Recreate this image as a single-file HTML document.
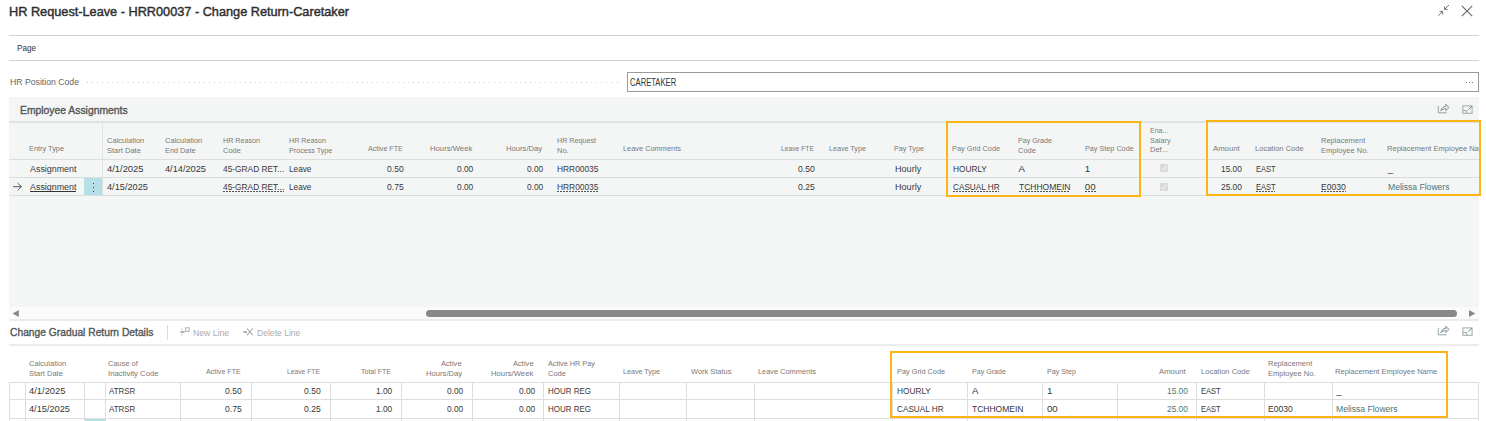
<!DOCTYPE html>
<html><head><meta charset="utf-8"><style>
html,body{margin:0;padding:0;}
body{width:1486px;height:421px;overflow:hidden;position:relative;background:#ffffff;font-family:'Liberation Sans', sans-serif;}
.t{position:absolute;white-space:nowrap;}
.b{position:absolute;}
</style></head><body>
<!-- header lines -->
<div class="b" style="left:9px;top:35px;width:1470px;height:1px;background:#d2d2d2"></div>
<div class="b" style="left:9px;top:60px;width:1470px;height:1px;background:#d2d2d2"></div>
<!-- dotted leader -->
<div class="b" style="left:87px;top:82px;width:535px;height:1px;background-image:linear-gradient(to right,#c2c2c2 1px,transparent 1px);background-size:5.1px 1px"></div>
<!-- input box -->
<div class="b" style="left:627px;top:72px;width:850px;height:18px;border:1px solid #9a9a9a;background:#fff"></div>
<div class="b" style="left:1466px;top:82px;width:1px;height:1px;background:#777;box-shadow:3px 0 0 #777,6px 0 0 #777"></div>
<!-- gray region -->
<div class="b" style="left:9px;top:97px;width:1470px;height:210px;background:#f4f6f5"></div>
<div class="b" style="left:9px;top:307px;width:1470px;height:13px;background:#fbfbfb"></div>
<!-- top table lines -->
<div class="b" style="left:9px;top:121px;width:1470px;height:2px;background:#e1e3e3"></div>
<div class="b" style="left:9px;top:159px;width:1470px;height:1px;background:#dcdede"></div>
<div class="b" style="left:9px;top:177px;width:1470px;height:1px;background:#dcdede"></div>
<div class="b" style="left:9px;top:195px;width:1470px;height:1px;background:#dcdede"></div>
<div class="b" style="left:102px;top:123px;width:1px;height:72px;background:#e1e3e3"></div>
<!-- blue cell -->
<div class="b" style="left:84px;top:178px;width:18px;height:17px;background:#b7dfe7"></div>
<div class="b" style="left:93px;top:183px;width:1px;height:1px;background:#444;box-shadow:0 4px 0 #444,0 8px 0 #444"></div>
<!-- arrow -->
<svg class="b" style="left:12px;top:182px" width="11" height="10" viewBox="0 0 11 10"><path d="M1 4.7H9.4M5.6 1L9.4 4.7L5.6 8.4" fill="none" stroke="#555" stroke-width="1"/></svg>
<!-- checkboxes -->
<svg class="b" style="left:1160px;top:164.4px" width="8" height="8" viewBox="0 0 8 8"><rect x="0" y="0" width="8" height="8" rx="1" fill="#dadada"/><path d="M1.8 4.2L3.4 5.7L6.3 2.2" fill="none" stroke="#fff" stroke-width="1"/></svg>
<svg class="b" style="left:1160px;top:183px" width="8" height="8" viewBox="0 0 8 8"><rect x="0" y="0" width="8" height="8" rx="1" fill="#dadada"/><path d="M1.8 4.2L3.4 5.7L6.3 2.2" fill="none" stroke="#fff" stroke-width="1"/></svg>
<!-- orange boxes -->
<div class="b" style="left:946px;top:121px;width:190.5px;height:72px;border:2px solid #fdb515"></div>
<div class="b" style="left:1205.5px;top:119.5px;width:271px;height:72.5px;border:2px solid #fdb515"></div>
<!-- scrollbar -->
<div class="b" style="left:425.5px;top:310px;width:1031.5px;height:7px;border-radius:3.5px;background:#888"></div>
<svg class="b" style="left:12px;top:310px" width="8" height="8" viewBox="0 0 8 8"><path d="M0.6 3.5L6.8 0V7Z" fill="#888"/></svg>
<svg class="b" style="left:1469px;top:310px" width="8" height="8" viewBox="0 0 8 8"><path d="M6.4 3.5L0 0V7Z" fill="#888"/></svg>
<!-- toolbar2 lines -->
<div class="b" style="left:9px;top:319px;width:1470px;height:2px;background:#ececec"></div>
<div class="b" style="left:9px;top:344px;width:1470px;height:2px;background:#ececec"></div>
<div class="b" style="left:167px;top:325px;width:1px;height:15px;background:#dcdcdc"></div>
<!-- new line icon -->
<svg class="b" style="left:180px;top:327px" width="11" height="10" viewBox="0 0 11 10"><path d="M0.5 5H4.5" stroke="#9a9a9a" stroke-width="1.6"/><path d="M2 1.5V3M2 7V8.8" stroke="#b5b5b5" stroke-width="0.9"/><rect x="5.5" y="0.8" width="3.6" height="3.6" fill="none" stroke="#b0b0b0" stroke-width="1"/></svg>
<!-- delete line icon -->
<svg class="b" style="left:243px;top:327px" width="11" height="10" viewBox="0 0 11 10"><path d="M0.5 5H4" stroke="#9a9a9a" stroke-width="1.6"/><path d="M4 1.5L9.8 8.2M4 8.2L9.8 1.5" stroke="#a8a8a8" stroke-width="1.1"/></svg>
<!-- share/expand icons (top) -->
<svg class="b" style="left:1437px;top:103px" width="14" height="11" viewBox="0 0 14 11"><path d="M1.3 3V9.8H9.8" fill="none" stroke="#93a5a8" stroke-width="1"/><path d="M3.8 7.8C4.5 4.8 6.5 3.4 8.8 3.4V1.2L12 4.5L8.8 7.6V5.6C6.8 5.6 5.2 6.5 3.8 7.8Z" fill="#e4ecee" stroke="#7b9093" stroke-width="0.9" stroke-linejoin="round"/></svg>
<svg class="b" style="left:1461.5px;top:104.5px" width="11" height="9" viewBox="0 0 11 9"><rect x="0.9" y="0.9" width="9.2" height="7.4" fill="none" stroke="#9aabad" stroke-width="1"/><path d="M0.9 5.6H4.8V8.3" fill="none" stroke="#9aabad" stroke-width="1"/><path d="M6.6 4.6L9.8 1.2" stroke="#5f6f71" stroke-width="0.9"/></svg>
<svg class="b" style="left:1437px;top:325px" width="14" height="11" viewBox="0 0 14 11"><path d="M1.3 3V9.8H9.8" fill="none" stroke="#93a5a8" stroke-width="1"/><path d="M3.8 7.8C4.5 4.8 6.5 3.4 8.8 3.4V1.2L12 4.5L8.8 7.6V5.6C6.8 5.6 5.2 6.5 3.8 7.8Z" fill="#e4ecee" stroke="#7b9093" stroke-width="0.9" stroke-linejoin="round"/></svg>
<svg class="b" style="left:1461.5px;top:326.5px" width="11" height="9" viewBox="0 0 11 9"><rect x="0.9" y="0.9" width="9.2" height="7.4" fill="none" stroke="#9aabad" stroke-width="1"/><path d="M0.9 5.6H4.8V8.3" fill="none" stroke="#9aabad" stroke-width="1"/><path d="M6.6 4.6L9.8 1.2" stroke="#5f6f71" stroke-width="0.9"/></svg>
<!-- collapse & close -->
<svg class="b" style="left:1437px;top:4px" width="13" height="13" viewBox="0 0 13 13"><path d="M1.2 11.8L5.6 7.4M2.6 7.4H5.6V10.4" fill="none" stroke="#777" stroke-width="1"/><path d="M12 1L7.6 5.4M7.6 2.4V5.4H10.6" fill="none" stroke="#777" stroke-width="1"/></svg>
<svg class="b" style="left:1461px;top:4.5px" width="12" height="12" viewBox="0 0 12 12"><path d="M0.8 0.8L11.2 11.2M11.2 0.8L0.8 11.2" stroke="#666" stroke-width="1.1"/></svg>
<!-- bottom table -->
<div class="b" style="left:9px;top:382px;width:1470px;height:1px;background:#dedede"></div>
<div class="b" style="left:9px;top:399px;width:1470px;height:1px;background:#dedede"></div>
<div class="b" style="left:9px;top:418px;width:1470px;height:1px;background:#dedede"></div>
<div class="b" style="left:84.5px;top:419px;width:20.5px;height:3px;background:#b7dfe7"></div>
<div class="b" style="left:8.9px;top:382px;width:1px;height:39px;background:#dedede"></div>
<div class="b" style="left:24.8px;top:382px;width:1px;height:39px;background:#dedede"></div>
<div class="b" style="left:83.8px;top:382px;width:1px;height:39px;background:#dedede"></div>
<div class="b" style="left:104.7px;top:382px;width:1px;height:39px;background:#dedede"></div>
<div class="b" style="left:180.0px;top:382px;width:1px;height:39px;background:#dedede"></div>
<div class="b" style="left:250.8px;top:382px;width:1px;height:39px;background:#dedede"></div>
<div class="b" style="left:329.9px;top:382px;width:1px;height:39px;background:#dedede"></div>
<div class="b" style="left:401.0px;top:382px;width:1px;height:39px;background:#dedede"></div>
<div class="b" style="left:472.3px;top:382px;width:1px;height:39px;background:#dedede"></div>
<div class="b" style="left:542.9px;top:382px;width:1px;height:39px;background:#dedede"></div>
<div class="b" style="left:619.0px;top:382px;width:1px;height:39px;background:#dedede"></div>
<div class="b" style="left:686.0px;top:382px;width:1px;height:39px;background:#dedede"></div>
<div class="b" style="left:753.7px;top:382px;width:1px;height:39px;background:#dedede"></div>
<div class="b" style="left:891.9px;top:382px;width:1px;height:39px;background:#dedede"></div>
<div class="b" style="left:967.0px;top:382px;width:1px;height:39px;background:#dedede"></div>
<div class="b" style="left:1042.1px;top:382px;width:1px;height:39px;background:#dedede"></div>
<div class="b" style="left:1117.0px;top:382px;width:1px;height:39px;background:#dedede"></div>
<div class="b" style="left:1196.4px;top:382px;width:1px;height:39px;background:#dedede"></div>
<div class="b" style="left:1264.0px;top:382px;width:1px;height:39px;background:#dedede"></div>
<div class="b" style="left:1331.6px;top:382px;width:1px;height:39px;background:#dedede"></div>
<div class="b" style="left:1477.8px;top:382px;width:1px;height:39px;background:#dedede"></div>
<div class="b" style="left:890px;top:351px;width:553.5px;height:63px;border:2px solid #fdb515"></div>

<div class='t' style='left:9.00px;top:4.76px;font-size:12.8px;line-height:14.8px;height:14.8px;font-weight:normal;color:#2e2e2e;letter-spacing:0.000px;transform:scaleX(0.9938);transform-origin:0 0;-webkit-text-stroke:0.42px #2e2e2e'>HR Request-Leave - HRR00037 - Change Return-Caretaker</div>
<div class='t' style='left:16.60px;top:42.68px;font-size:9.0px;line-height:11.0px;height:11.0px;font-weight:normal;color:#333333;letter-spacing:0.000px;transform:scaleX(0.9082);transform-origin:0 0'>Page</div>
<div class='t' style='left:9.60px;top:77.18px;font-size:9.0px;line-height:11.0px;height:11.0px;font-weight:normal;color:#666666;letter-spacing:0.000px;transform:scaleX(0.9644);transform-origin:0 0'>HR Position Code</div>
<div class='t' style='left:629.80px;top:77.13px;font-size:10px;line-height:12px;height:12px;font-weight:normal;color:#333333;letter-spacing:0.000px;transform:scaleX(0.7650);transform-origin:0 0'>CARETAKER</div>
<div class='t' style='left:19.60px;top:103.78px;font-size:10.6px;line-height:12.6px;height:12.6px;font-weight:normal;color:#505556;letter-spacing:0.000px;transform:scaleX(0.9771);transform-origin:0 0;-webkit-text-stroke:0.35px #505556'>Employee Assignments</div>
<div class='t' style='left:29.30px;top:144.20px;font-size:7.8px;line-height:9.8px;height:9.8px;font-weight:normal;color:#787878;letter-spacing:0.000px;transform:scaleX(0.9424);transform-origin:0 0'>Entry Type</div>
<div class='t' style='left:106.70px;top:135.80px;font-size:7.8px;line-height:9.8px;height:9.8px;font-weight:normal;color:#787878;letter-spacing:0.000px;transform:scaleX(0.9669);transform-origin:0 0'>Calculation</div>
<div class='t' style='left:106.70px;top:145.80px;font-size:7.8px;line-height:9.8px;height:9.8px;font-weight:normal;color:#787878;letter-spacing:0.000px;transform:scaleX(0.9656);transform-origin:0 0'>Start Date</div>
<div class='t' style='left:164.70px;top:135.80px;font-size:7.8px;line-height:9.8px;height:9.8px;font-weight:normal;color:#787878;letter-spacing:0.000px;transform:scaleX(0.9669);transform-origin:0 0'>Calculation</div>
<div class='t' style='left:164.70px;top:145.80px;font-size:7.8px;line-height:9.8px;height:9.8px;font-weight:normal;color:#787878;letter-spacing:0.000px;transform:scaleX(0.9380);transform-origin:0 0'>End Date</div>
<div class='t' style='left:222.90px;top:135.80px;font-size:7.8px;line-height:9.8px;height:9.8px;font-weight:normal;color:#787878;letter-spacing:0.000px;transform:scaleX(0.9203);transform-origin:0 0'>HR Reason</div>
<div class='t' style='left:222.90px;top:145.80px;font-size:7.8px;line-height:9.8px;height:9.8px;font-weight:normal;color:#787878;letter-spacing:0.000px;transform:scaleX(0.9549);transform-origin:0 0'>Code</div>
<div class='t' style='left:289.20px;top:135.80px;font-size:7.8px;line-height:9.8px;height:9.8px;font-weight:normal;color:#787878;letter-spacing:0.000px;transform:scaleX(0.9203);transform-origin:0 0'>HR Reason</div>
<div class='t' style='left:289.20px;top:145.80px;font-size:7.8px;line-height:9.8px;height:9.8px;font-weight:normal;color:#787878;letter-spacing:0.000px;transform:scaleX(0.9194);transform-origin:0 0'>Process Type</div>
<div class='t' style='left:368.00px;top:144.20px;font-size:7.8px;line-height:9.8px;height:9.8px;font-weight:normal;color:#787878;letter-spacing:0.000px;transform:scaleX(0.9128);transform-origin:0 0'>Active FTE</div>
<div class='t' style='left:430.00px;top:144.20px;font-size:7.8px;line-height:9.8px;height:9.8px;font-weight:normal;color:#787878;letter-spacing:0.000px;transform:scaleX(0.9891);transform-origin:0 0'>Hours/Week</div>
<div class='t' style='left:505.80px;top:144.20px;font-size:7.8px;line-height:9.8px;height:9.8px;font-weight:normal;color:#787878;letter-spacing:0.000px;transform:scaleX(0.9825);transform-origin:0 0'>Hours/Day</div>
<div class='t' style='left:557.00px;top:135.80px;font-size:7.8px;line-height:9.8px;height:9.8px;font-weight:normal;color:#787878;letter-spacing:0.000px;transform:scaleX(0.9183);transform-origin:0 0'>HR Request</div>
<div class='t' style='left:557.00px;top:145.80px;font-size:7.8px;line-height:9.8px;height:9.8px;font-weight:normal;color:#787878;letter-spacing:0.000px;transform:scaleX(0.9555);transform-origin:0 0'>No.</div>
<div class='t' style='left:622.80px;top:144.20px;font-size:7.8px;line-height:9.8px;height:9.8px;font-weight:normal;color:#787878;letter-spacing:0.000px;transform:scaleX(0.9475);transform-origin:0 0'>Leave Comments</div>
<div class='t' style='left:780.90px;top:144.20px;font-size:7.8px;line-height:9.8px;height:9.8px;font-weight:normal;color:#787878;letter-spacing:0.000px;transform:scaleX(0.8626);transform-origin:0 0'>Leave FTE</div>
<div class='t' style='left:828.50px;top:144.20px;font-size:7.8px;line-height:9.8px;height:9.8px;font-weight:normal;color:#787878;letter-spacing:0.000px;transform:scaleX(0.9182);transform-origin:0 0'>Leave Type</div>
<div class='t' style='left:894.10px;top:144.20px;font-size:7.8px;line-height:9.8px;height:9.8px;font-weight:normal;color:#787878;letter-spacing:0.000px;transform:scaleX(0.9236);transform-origin:0 0'>Pay Type</div>
<div class='t' style='left:952.20px;top:144.20px;font-size:7.8px;line-height:9.8px;height:9.8px;font-weight:normal;color:#787878;letter-spacing:0.000px;transform:scaleX(0.9405);transform-origin:0 0'>Pay Grid Code</div>
<div class='t' style='left:1018.40px;top:135.80px;font-size:7.8px;line-height:9.8px;height:9.8px;font-weight:normal;color:#787878;letter-spacing:0.000px;transform:scaleX(0.9093);transform-origin:0 0'>Pay Grade</div>
<div class='t' style='left:1018.40px;top:145.80px;font-size:7.8px;line-height:9.8px;height:9.8px;font-weight:normal;color:#787878;letter-spacing:0.000px;transform:scaleX(0.9549);transform-origin:0 0'>Code</div>
<div class='t' style='left:1084.60px;top:144.20px;font-size:7.8px;line-height:9.8px;height:9.8px;font-weight:normal;color:#787878;letter-spacing:0.000px;transform:scaleX(0.9284);transform-origin:0 0'>Pay Step Code</div>
<div class='t' style='left:1150.20px;top:126.00px;font-size:7.8px;line-height:9.8px;height:9.8px;font-weight:normal;color:#787878;letter-spacing:0.000px;transform:scaleX(0.9031);transform-origin:0 0'>Ena...</div>
<div class='t' style='left:1150.20px;top:136.00px;font-size:7.8px;line-height:9.8px;height:9.8px;font-weight:normal;color:#787878;letter-spacing:0.000px;transform:scaleX(0.9272);transform-origin:0 0'>Salary</div>
<div class='t' style='left:1150.20px;top:145.30px;font-size:7.8px;line-height:9.8px;height:9.8px;font-weight:normal;color:#787878;letter-spacing:0.000px;transform:scaleX(0.9603);transform-origin:0 0'>Def...</div>
<div class='t' style='left:1213.40px;top:144.20px;font-size:7.8px;line-height:9.8px;height:9.8px;font-weight:normal;color:#787878;letter-spacing:0.000px;transform:scaleX(0.9935);transform-origin:0 0'>Amount</div>
<div class='t' style='left:1255.40px;top:144.20px;font-size:7.8px;line-height:9.8px;height:9.8px;font-weight:normal;color:#787878;letter-spacing:0.000px;transform:scaleX(0.9683);transform-origin:0 0'>Location Code</div>
<div class='t' style='left:1320.70px;top:135.80px;font-size:7.8px;line-height:9.8px;height:9.8px;font-weight:normal;color:#787878;letter-spacing:0.000px;transform:scaleX(0.9640);transform-origin:0 0'>Replacement</div>
<div class='t' style='left:1320.70px;top:145.80px;font-size:7.8px;line-height:9.8px;height:9.8px;font-weight:normal;color:#787878;letter-spacing:0.000px;transform:scaleX(0.9697);transform-origin:0 0'>Employee No.</div>
<div class='t' style='left:1386.80px;top:144.20px;font-size:7.8px;line-height:9.8px;height:9.8px;font-weight:normal;color:#787878;letter-spacing:0.000px;width:94.79px;overflow:hidden;transform:scaleX(0.9674);transform-origin:0 0'>Replacement Employee Name</div>
<div class='t' style='left:29.70px;top:162.59px;font-size:9.7px;line-height:11.7px;height:11.7px;font-weight:normal;color:#383838;letter-spacing:0.000px;transform:scaleX(0.9185);transform-origin:0 0'>Assignment</div>
<div class='t' style='left:29.70px;top:180.79px;font-size:9.7px;line-height:11.7px;height:11.7px;font-weight:normal;color:#383838;letter-spacing:0.000px;transform:scaleX(0.9185);transform-origin:0 0'>Assignment</div><div class='b' style='left:29.70px;top:191.10px;width:46.50px;height:1px;background:#333'></div>
<div class='t' style='left:106.90px;top:162.59px;font-size:9.7px;line-height:11.7px;height:11.7px;font-weight:normal;color:#383838;letter-spacing:0.000px;transform:scaleX(0.9677);transform-origin:0 0'>4/1/2025</div>
<div class='t' style='left:106.90px;top:180.79px;font-size:9.7px;line-height:11.7px;height:11.7px;font-weight:normal;color:#383838;letter-spacing:0.000px;transform:scaleX(0.9511);transform-origin:0 0'>4/15/2025</div>
<div class='t' style='left:164.90px;top:162.59px;font-size:9.7px;line-height:11.7px;height:11.7px;font-weight:normal;color:#383838;letter-spacing:0.000px;transform:scaleX(0.9511);transform-origin:0 0'>4/14/2025</div>
<div class='t' style='left:223.10px;top:162.59px;font-size:9.7px;line-height:11.7px;height:11.7px;font-weight:normal;color:#383838;letter-spacing:0.000px;transform:scaleX(0.8612);transform-origin:0 0'>45-GRAD RET...</div>
<div class='t' style='left:223.10px;top:180.79px;font-size:9.7px;line-height:11.7px;height:11.7px;font-weight:normal;color:#383838;letter-spacing:0.000px;transform:scaleX(0.8612);transform-origin:0 0'>45-GRAD RET...</div><div class='b' style='left:223.10px;top:191.10px;width:61.20px;height:1px;background-image:linear-gradient(to right,#555 2px,transparent 2px);background-size:3px 1px'></div>
<div class='t' style='left:289.40px;top:162.59px;font-size:9.7px;line-height:11.7px;height:11.7px;font-weight:normal;color:#383838;letter-spacing:0.000px;transform:scaleX(0.8483);transform-origin:0 0'>Leave</div>
<div class='t' style='left:289.40px;top:180.79px;font-size:9.7px;line-height:11.7px;height:11.7px;font-weight:normal;color:#383838;letter-spacing:0.000px;transform:scaleX(0.8483);transform-origin:0 0'>Leave</div>
<div class='t' style='left:387.30px;top:162.59px;font-size:9.7px;line-height:11.7px;height:11.7px;font-weight:normal;color:#383838;letter-spacing:0.000px;transform:scaleX(0.8855);transform-origin:0 0'>0.50</div>
<div class='t' style='left:387.30px;top:180.79px;font-size:9.7px;line-height:11.7px;height:11.7px;font-weight:normal;color:#383838;letter-spacing:0.000px;transform:scaleX(0.8855);transform-origin:0 0'>0.75</div>
<div class='t' style='left:457.10px;top:162.59px;font-size:9.7px;line-height:11.7px;height:11.7px;font-weight:normal;color:#383838;letter-spacing:0.000px;transform:scaleX(0.8590);transform-origin:0 0'>0.00</div>
<div class='t' style='left:457.10px;top:180.79px;font-size:9.7px;line-height:11.7px;height:11.7px;font-weight:normal;color:#383838;letter-spacing:0.000px;transform:scaleX(0.8590);transform-origin:0 0'>0.00</div>
<div class='t' style='left:527.30px;top:162.59px;font-size:9.7px;line-height:11.7px;height:11.7px;font-weight:normal;color:#383838;letter-spacing:0.000px;transform:scaleX(0.8590);transform-origin:0 0'>0.00</div>
<div class='t' style='left:527.30px;top:180.79px;font-size:9.7px;line-height:11.7px;height:11.7px;font-weight:normal;color:#383838;letter-spacing:0.000px;transform:scaleX(0.8590);transform-origin:0 0'>0.00</div>
<div class='t' style='left:557.20px;top:162.59px;font-size:9.7px;line-height:11.7px;height:11.7px;font-weight:normal;color:#383838;letter-spacing:0.000px;transform:scaleX(0.8636);transform-origin:0 0'>HRR00035</div>
<div class='t' style='left:557.20px;top:180.79px;font-size:9.7px;line-height:11.7px;height:11.7px;font-weight:normal;color:#383838;letter-spacing:0.000px;transform:scaleX(0.8636);transform-origin:0 0'>HRR00035</div><div class='b' style='left:557.20px;top:191.10px;width:41.40px;height:1px;background-image:linear-gradient(to right,#555 2px,transparent 2px);background-size:3px 1px'></div>
<div class='t' style='left:798.30px;top:162.59px;font-size:9.7px;line-height:11.7px;height:11.7px;font-weight:normal;color:#383838;letter-spacing:0.000px;transform:scaleX(0.8855);transform-origin:0 0'>0.50</div>
<div class='t' style='left:798.30px;top:180.79px;font-size:9.7px;line-height:11.7px;height:11.7px;font-weight:normal;color:#383838;letter-spacing:0.000px;transform:scaleX(0.8855);transform-origin:0 0'>0.25</div>
<div class='t' style='left:894.70px;top:162.59px;font-size:9.7px;line-height:11.7px;height:11.7px;font-weight:normal;color:#383838;letter-spacing:0.000px;transform:scaleX(0.9357);transform-origin:0 0'>Hourly</div>
<div class='t' style='left:894.70px;top:180.79px;font-size:9.7px;line-height:11.7px;height:11.7px;font-weight:normal;color:#383838;letter-spacing:0.000px;transform:scaleX(0.9357);transform-origin:0 0'>Hourly</div>
<div class='t' style='left:952.50px;top:162.59px;font-size:9.7px;line-height:11.7px;height:11.7px;font-weight:normal;color:#383838;letter-spacing:0.000px;transform:scaleX(0.8548);transform-origin:0 0'>HOURLY</div>
<div class='t' style='left:952.50px;top:180.79px;font-size:9.7px;line-height:11.7px;height:11.7px;font-weight:normal;color:#383838;letter-spacing:0.000px;transform:scaleX(0.8458);transform-origin:0 0'>CASUAL HR</div><div class='b' style='left:952.50px;top:191.10px;width:46.60px;height:1px;background-image:linear-gradient(to right,#555 2px,transparent 2px);background-size:3px 1px'></div>
<div class='t' style='left:1018.60px;top:162.59px;font-size:9.7px;line-height:11.7px;height:11.7px;font-weight:normal;color:#383838;letter-spacing:0.000px'>A</div>
<div class='t' style='left:1018.60px;top:180.79px;font-size:9.7px;line-height:11.7px;height:11.7px;font-weight:normal;color:#383838;letter-spacing:0.000px;transform:scaleX(0.8778);transform-origin:0 0'>TCHHOMEIN</div><div class='b' style='left:1018.60px;top:191.10px;width:51.50px;height:1px;background-image:linear-gradient(to right,#555 2px,transparent 2px);background-size:3px 1px'></div>
<div class='t' style='left:1084.80px;top:162.59px;font-size:9.7px;line-height:11.7px;height:11.7px;font-weight:normal;color:#383838;letter-spacing:0.000px'>1</div>
<div class='t' style='left:1084.80px;top:180.79px;font-size:9.7px;line-height:11.7px;height:11.7px;font-weight:normal;color:#383838;letter-spacing:0.019px'>00</div><div class='b' style='left:1084.80px;top:191.10px;width:10.80px;height:1px;background-image:linear-gradient(to right,#555 2px,transparent 2px);background-size:3px 1px'></div>
<div class='t' style='left:1220.70px;top:162.59px;font-size:9.7px;line-height:11.7px;height:11.7px;font-weight:normal;color:#383838;letter-spacing:0.000px;transform:scaleX(0.8619);transform-origin:0 0'>15.00</div>
<div class='t' style='left:1220.70px;top:180.79px;font-size:9.7px;line-height:11.7px;height:11.7px;font-weight:normal;color:#383838;letter-spacing:0.000px;transform:scaleX(0.8619);transform-origin:0 0'>25.00</div>
<div class='t' style='left:1255.60px;top:162.59px;font-size:9.7px;line-height:11.7px;height:11.7px;font-weight:normal;color:#383838;letter-spacing:0.000px;transform:scaleX(0.7783);transform-origin:0 0'>EAST</div>
<div class='t' style='left:1255.60px;top:180.79px;font-size:9.7px;line-height:11.7px;height:11.7px;font-weight:normal;color:#383838;letter-spacing:0.000px;transform:scaleX(0.7783);transform-origin:0 0'>EAST</div><div class='b' style='left:1255.60px;top:191.10px;width:19.70px;height:1px;background-image:linear-gradient(to right,#555 2px,transparent 2px);background-size:3px 1px'></div>
<div class='t' style='left:1320.90px;top:180.79px;font-size:9.7px;line-height:11.7px;height:11.7px;font-weight:normal;color:#383838;letter-spacing:0.000px;transform:scaleX(0.8888);transform-origin:0 0'>E0030</div><div class='b' style='left:1320.90px;top:191.10px;width:24.90px;height:1px;background-image:linear-gradient(to right,#555 2px,transparent 2px);background-size:3px 1px'></div>
<div class='t' style='left:1387.50px;top:180.79px;font-size:9.7px;line-height:11.7px;height:11.7px;font-weight:normal;color:#4a7579;letter-spacing:0.000px;transform:scaleX(0.8855);transform-origin:0 0'>Melissa Flowers</div>
<div class='t' style='left:1387.70px;top:163.09px;font-size:9.7px;line-height:11.7px;height:11.7px;font-weight:normal;color:#383838;letter-spacing:0.000px'>_</div>
<div class='t' style='left:9.80px;top:326.33px;font-size:10.6px;line-height:12.6px;height:12.6px;font-weight:normal;color:#505556;letter-spacing:0.000px;transform:scaleX(0.9695);transform-origin:0 0;-webkit-text-stroke:0.35px #505556'>Change Gradual Return Details</div>
<div class='t' style='left:193.40px;top:327.98px;font-size:9.0px;line-height:11.0px;height:11.0px;font-weight:normal;color:#ababab;letter-spacing:0.000px;transform:scaleX(0.9645);transform-origin:0 0'>New Line</div>
<div class='t' style='left:256.90px;top:327.98px;font-size:9.0px;line-height:11.0px;height:11.0px;font-weight:normal;color:#ababab;letter-spacing:0.000px;transform:scaleX(0.9529);transform-origin:0 0'>Delete Line</div>
<div class='t' style='left:29.20px;top:358.70px;font-size:7.8px;line-height:9.8px;height:9.8px;font-weight:normal;color:#787878;letter-spacing:0.000px;transform:scaleX(0.9669);transform-origin:0 0'>Calculation</div>
<div class='t' style='left:29.20px;top:369.10px;font-size:7.8px;line-height:9.8px;height:9.8px;font-weight:normal;color:#787878;letter-spacing:0.000px;transform:scaleX(0.9656);transform-origin:0 0'>Start Date</div>
<div class='t' style='left:108.30px;top:358.70px;font-size:7.8px;line-height:9.8px;height:9.8px;font-weight:normal;color:#787878;letter-spacing:0.000px;transform:scaleX(0.9546);transform-origin:0 0'>Cause of</div>
<div class='t' style='left:108.30px;top:369.10px;font-size:7.8px;line-height:9.8px;height:9.8px;font-weight:normal;color:#787878;letter-spacing:0.000px;transform:scaleX(0.9875);transform-origin:0 0'>Inactivity Code</div>
<div class='t' style='left:205.80px;top:367.20px;font-size:7.8px;line-height:9.8px;height:9.8px;font-weight:normal;color:#787878;letter-spacing:0.000px;transform:scaleX(0.9128);transform-origin:0 0'>Active FTE</div>
<div class='t' style='left:286.80px;top:367.20px;font-size:7.8px;line-height:9.8px;height:9.8px;font-weight:normal;color:#787878;letter-spacing:0.000px;transform:scaleX(0.8626);transform-origin:0 0'>Leave FTE</div>
<div class='t' style='left:361.10px;top:367.20px;font-size:7.8px;line-height:9.8px;height:9.8px;font-weight:normal;color:#787878;letter-spacing:0.000px;transform:scaleX(0.8959);transform-origin:0 0'>Total FTE</div>
<div class='t' style='left:441.40px;top:358.70px;font-size:7.8px;line-height:9.8px;height:9.8px;font-weight:normal;color:#787878;letter-spacing:0.000px;transform:scaleX(0.9701);transform-origin:0 0'>Active</div>
<div class='t' style='left:425.80px;top:369.10px;font-size:7.8px;line-height:9.8px;height:9.8px;font-weight:normal;color:#787878;letter-spacing:0.000px;transform:scaleX(0.9825);transform-origin:0 0'>Hours/Day</div>
<div class='t' style='left:512.50px;top:358.70px;font-size:7.8px;line-height:9.8px;height:9.8px;font-weight:normal;color:#787878;letter-spacing:0.000px;transform:scaleX(0.9701);transform-origin:0 0'>Active</div>
<div class='t' style='left:490.80px;top:369.10px;font-size:7.8px;line-height:9.8px;height:9.8px;font-weight:normal;color:#787878;letter-spacing:0.000px;transform:scaleX(0.9891);transform-origin:0 0'>Hours/Week</div>
<div class='t' style='left:547.80px;top:358.70px;font-size:7.8px;line-height:9.8px;height:9.8px;font-weight:normal;color:#787878;letter-spacing:0.000px;transform:scaleX(0.9311);transform-origin:0 0'>Active HR Pay</div>
<div class='t' style='left:547.80px;top:369.10px;font-size:7.8px;line-height:9.8px;height:9.8px;font-weight:normal;color:#787878;letter-spacing:0.000px;transform:scaleX(0.9549);transform-origin:0 0'>Code</div>
<div class='t' style='left:623.10px;top:367.20px;font-size:7.8px;line-height:9.8px;height:9.8px;font-weight:normal;color:#787878;letter-spacing:0.000px;transform:scaleX(0.9182);transform-origin:0 0'>Leave Type</div>
<div class='t' style='left:690.60px;top:367.20px;font-size:7.8px;line-height:9.8px;height:9.8px;font-weight:normal;color:#787878;letter-spacing:0.000px;transform:scaleX(0.9544);transform-origin:0 0'>Work Status</div>
<div class='t' style='left:757.80px;top:367.20px;font-size:7.8px;line-height:9.8px;height:9.8px;font-weight:normal;color:#787878;letter-spacing:0.000px;transform:scaleX(0.9475);transform-origin:0 0'>Leave Comments</div>
<div class='t' style='left:896.50px;top:367.20px;font-size:7.8px;line-height:9.8px;height:9.8px;font-weight:normal;color:#787878;letter-spacing:0.000px;transform:scaleX(0.9405);transform-origin:0 0'>Pay Grid Code</div>
<div class='t' style='left:971.80px;top:367.20px;font-size:7.8px;line-height:9.8px;height:9.8px;font-weight:normal;color:#787878;letter-spacing:0.000px;transform:scaleX(0.9093);transform-origin:0 0'>Pay Grade</div>
<div class='t' style='left:1046.70px;top:367.20px;font-size:7.8px;line-height:9.8px;height:9.8px;font-weight:normal;color:#787878;letter-spacing:0.000px;transform:scaleX(0.9134);transform-origin:0 0'>Pay Step</div>
<div class='t' style='left:1159.30px;top:367.20px;font-size:7.8px;line-height:9.8px;height:9.8px;font-weight:normal;color:#787878;letter-spacing:0.000px;transform:scaleX(0.9935);transform-origin:0 0'>Amount</div>
<div class='t' style='left:1201.00px;top:367.20px;font-size:7.8px;line-height:9.8px;height:9.8px;font-weight:normal;color:#787878;letter-spacing:0.000px;transform:scaleX(0.9683);transform-origin:0 0'>Location Code</div>
<div class='t' style='left:1268.00px;top:358.70px;font-size:7.8px;line-height:9.8px;height:9.8px;font-weight:normal;color:#787878;letter-spacing:0.000px;transform:scaleX(0.9640);transform-origin:0 0'>Replacement</div>
<div class='t' style='left:1268.00px;top:369.10px;font-size:7.8px;line-height:9.8px;height:9.8px;font-weight:normal;color:#787878;letter-spacing:0.000px;transform:scaleX(0.9697);transform-origin:0 0'>Employee No.</div>
<div class='t' style='left:1335.40px;top:367.20px;font-size:7.8px;line-height:9.8px;height:9.8px;font-weight:normal;color:#787878;letter-spacing:0.000px;transform:scaleX(0.9674);transform-origin:0 0'>Replacement Employee Name</div>
<div class='t' style='left:29.40px;top:384.89px;font-size:9.7px;line-height:11.7px;height:11.7px;font-weight:normal;color:#383838;letter-spacing:0.000px;transform:scaleX(0.9677);transform-origin:0 0'>4/1/2025</div>
<div class='t' style='left:29.40px;top:403.49px;font-size:9.7px;line-height:11.7px;height:11.7px;font-weight:normal;color:#383838;letter-spacing:0.000px;transform:scaleX(0.9511);transform-origin:0 0'>4/15/2025</div>
<div class='t' style='left:108.50px;top:384.89px;font-size:9.7px;line-height:11.7px;height:11.7px;font-weight:normal;color:#383838;letter-spacing:0.000px;transform:scaleX(0.8156);transform-origin:0 0'>ATRSR</div>
<div class='t' style='left:108.50px;top:403.49px;font-size:9.7px;line-height:11.7px;height:11.7px;font-weight:normal;color:#383838;letter-spacing:0.000px;transform:scaleX(0.8156);transform-origin:0 0'>ATRSR</div>
<div class='t' style='left:224.50px;top:384.89px;font-size:9.7px;line-height:11.7px;height:11.7px;font-weight:normal;color:#383838;letter-spacing:0.000px;transform:scaleX(0.8855);transform-origin:0 0'>0.50</div>
<div class='t' style='left:224.50px;top:403.49px;font-size:9.7px;line-height:11.7px;height:11.7px;font-weight:normal;color:#383838;letter-spacing:0.000px;transform:scaleX(0.8855);transform-origin:0 0'>0.75</div>
<div class='t' style='left:304.00px;top:384.89px;font-size:9.7px;line-height:11.7px;height:11.7px;font-weight:normal;color:#383838;letter-spacing:0.000px;transform:scaleX(0.8855);transform-origin:0 0'>0.50</div>
<div class='t' style='left:304.00px;top:403.49px;font-size:9.7px;line-height:11.7px;height:11.7px;font-weight:normal;color:#383838;letter-spacing:0.000px;transform:scaleX(0.8855);transform-origin:0 0'>0.25</div>
<div class='t' style='left:375.80px;top:384.89px;font-size:9.7px;line-height:11.7px;height:11.7px;font-weight:normal;color:#383838;letter-spacing:0.000px;transform:scaleX(0.8590);transform-origin:0 0'>1.00</div>
<div class='t' style='left:375.80px;top:403.49px;font-size:9.7px;line-height:11.7px;height:11.7px;font-weight:normal;color:#383838;letter-spacing:0.000px;transform:scaleX(0.8590);transform-origin:0 0'>1.00</div>
<div class='t' style='left:447.10px;top:384.89px;font-size:9.7px;line-height:11.7px;height:11.7px;font-weight:normal;color:#383838;letter-spacing:0.000px;transform:scaleX(0.8590);transform-origin:0 0'>0.00</div>
<div class='t' style='left:447.10px;top:403.49px;font-size:9.7px;line-height:11.7px;height:11.7px;font-weight:normal;color:#383838;letter-spacing:0.000px;transform:scaleX(0.8590);transform-origin:0 0'>0.00</div>
<div class='t' style='left:518.50px;top:384.89px;font-size:9.7px;line-height:11.7px;height:11.7px;font-weight:normal;color:#383838;letter-spacing:0.000px;transform:scaleX(0.8590);transform-origin:0 0'>0.00</div>
<div class='t' style='left:518.50px;top:403.49px;font-size:9.7px;line-height:11.7px;height:11.7px;font-weight:normal;color:#383838;letter-spacing:0.000px;transform:scaleX(0.8590);transform-origin:0 0'>0.00</div>
<div class='t' style='left:548.00px;top:384.89px;font-size:9.7px;line-height:11.7px;height:11.7px;font-weight:normal;color:#383838;letter-spacing:0.000px;transform:scaleX(0.8235);transform-origin:0 0'>HOUR REG</div>
<div class='t' style='left:548.00px;top:403.49px;font-size:9.7px;line-height:11.7px;height:11.7px;font-weight:normal;color:#383838;letter-spacing:0.000px;transform:scaleX(0.8235);transform-origin:0 0'>HOUR REG</div>
<div class='t' style='left:896.70px;top:384.89px;font-size:9.7px;line-height:11.7px;height:11.7px;font-weight:normal;color:#383838;letter-spacing:0.000px;transform:scaleX(0.8548);transform-origin:0 0'>HOURLY</div>
<div class='t' style='left:896.70px;top:403.49px;font-size:9.7px;line-height:11.7px;height:11.7px;font-weight:normal;color:#383838;letter-spacing:0.000px;transform:scaleX(0.8458);transform-origin:0 0'>CASUAL HR</div>
<div class='t' style='left:972.00px;top:384.89px;font-size:9.7px;line-height:11.7px;height:11.7px;font-weight:normal;color:#383838;letter-spacing:0.000px'>A</div>
<div class='t' style='left:972.00px;top:403.49px;font-size:9.7px;line-height:11.7px;height:11.7px;font-weight:normal;color:#383838;letter-spacing:0.000px;transform:scaleX(0.8778);transform-origin:0 0'>TCHHOMEIN</div>
<div class='t' style='left:1046.90px;top:384.89px;font-size:9.7px;line-height:11.7px;height:11.7px;font-weight:normal;color:#383838;letter-spacing:0.000px'>1</div>
<div class='t' style='left:1046.90px;top:403.49px;font-size:9.7px;line-height:11.7px;height:11.7px;font-weight:normal;color:#383838;letter-spacing:0.019px'>00</div>
<div class='t' style='left:1166.60px;top:384.89px;font-size:9.7px;line-height:11.7px;height:11.7px;font-weight:normal;color:#4a7579;letter-spacing:0.000px;transform:scaleX(0.8619);transform-origin:0 0'>15.00</div>
<div class='t' style='left:1166.60px;top:403.49px;font-size:9.7px;line-height:11.7px;height:11.7px;font-weight:normal;color:#4a7579;letter-spacing:0.000px;transform:scaleX(0.8619);transform-origin:0 0'>25.00</div>
<div class='t' style='left:1201.20px;top:384.89px;font-size:9.7px;line-height:11.7px;height:11.7px;font-weight:normal;color:#383838;letter-spacing:0.000px;transform:scaleX(0.7783);transform-origin:0 0'>EAST</div>
<div class='t' style='left:1201.20px;top:403.49px;font-size:9.7px;line-height:11.7px;height:11.7px;font-weight:normal;color:#383838;letter-spacing:0.000px;transform:scaleX(0.7783);transform-origin:0 0'>EAST</div>
<div class='t' style='left:1268.20px;top:403.49px;font-size:9.7px;line-height:11.7px;height:11.7px;font-weight:normal;color:#383838;letter-spacing:0.000px;transform:scaleX(0.8888);transform-origin:0 0'>E0030</div>
<div class='t' style='left:1335.60px;top:403.49px;font-size:9.7px;line-height:11.7px;height:11.7px;font-weight:normal;color:#4a7579;letter-spacing:0.000px;transform:scaleX(0.8855);transform-origin:0 0'>Melissa Flowers</div>
<div class='t' style='left:1336.30px;top:385.39px;font-size:9.7px;line-height:11.7px;height:11.7px;font-weight:normal;color:#383838;letter-spacing:0.000px'>_</div>
</body></html>
